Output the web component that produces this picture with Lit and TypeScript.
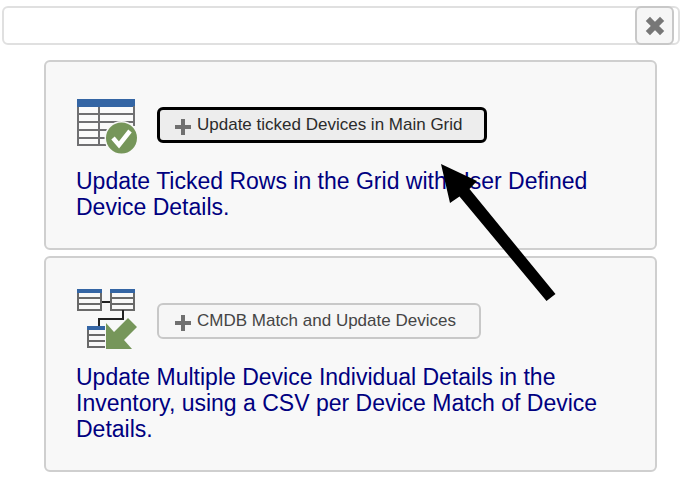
import { LitElement, html, css, svg } from "lit";
import { customElement } from "lit/decorators.js";

const plus = html`<svg class="plus" viewBox="0 -4 16 20" aria-hidden="true">
  <path d="M8 2V14M2 8H14" stroke="currentColor" stroke-width="4" stroke-linecap="square" />
</svg>`;

const miniTable = (x: number, y: number) => svg`
  <g transform="translate(${x} ${y})">
    <rect x="1" y="1" width="23" height="20" fill="#f8f8f8" stroke="#696969" stroke-width="2" />
    <path d="M1 9H25M1 15H25" stroke="#696969" stroke-width="2" />
    <rect width="25" height="4" fill="#3465a4" />
  </g>`;

const tableTickIcon = html`<svg class="icon" viewBox="0 1 62 62" aria-hidden="true">
  <rect x="2" y="8" width="56" height="45" fill="#fafafa" />
  <path d="M2 14V53H58V14M2 22H58M2 30H58M2 38H58M2 46H58M23 14V53"
    fill="none" stroke="#707072" stroke-width="2" />
  <rect x="1" y="7" width="58" height="8" fill="#3465a4" />
  <path d="M30 63V44Q32 35 44 31H62V63Z" fill="#f8f8f8" />
  <path d="M58 14V34" stroke="#707072" stroke-width="2" />
  <circle cx="45.500" cy="46" r="17" fill="#f8f8f8" />
  <circle cx="45.500" cy="46" r="15.500" fill="#76965a" />
  <path d="M37 46L43 53L54 39" fill="none" stroke="#fff" stroke-width="4.500" />
</svg>`;

const mappingIcon = html`<svg class="icon" viewBox="0 1 62 62" aria-hidden="true">
  <path d="M26 14H35" fill="none" stroke="#222" stroke-width="2" />
  ${miniTable(1, 1)}${miniTable(34, 1)}${miniTable(11, 38)}
  <path d="M29 33V62H62V30H50L41 38H30Z" fill="#f8f8f8" />
  <path d="M47 22V31H23V38" fill="none" stroke="#222" stroke-width="2" />
  <path d="M30 35L38 44L52 30L61 39L48 52L56 61H30Z" fill="#76965a" />
</svg>`;

@customElement("app-root")
export class AppRoot extends LitElement {
  static styles = css`
    :host {
      display: block;
      padding: 6px 1px 12px 2px;
      background: #fff;
      font-family: "Liberation Sans", Arial, sans-serif;
    }
    * {
      box-sizing: border-box;
    }
    .titlebar {
      display: flex;
      justify-content: flex-end;
      border: 2px solid #e0e0e0;
      border-radius: 6px;
      padding-right: 4px;
    }
    button {
      display: flex;
      align-items: center;
      justify-content: center;
      margin: 0;
      font: inherit;
      color: #454545;
      background: #f6f6f6;
      border: 2px solid #c8c8c8;
      border-radius: 6px;
    }
    .close {
      width: 39px;
      height: 39px;
      margin: -2px 0;
      padding: 0;
      color: #777;
    }
    .close svg {
      width: 20px;
      height: 20px;
    }
    main {
      display: flex;
      flex-direction: column;
      gap: 6px;
      padding: 15px 23px 0 42px;
    }
    .card {
      position: relative;
      padding: 31px 48px 28px 30px;
      background: #f8f8f8;
      border: 2px solid #cfcfcf;
      border-radius: 6px;
    }
    .row {
      display: flex;
      align-items: flex-start;
      gap: 19px;
    }
    .icon {
      flex: none;
      width: 62px;
      height: 62px;
    }
    .action {
      height: 36px;
      margin-top: 14px;
      padding: 0 23px 0 16px;
      gap: 6px;
      font-size: 17px;
      white-space: nowrap;
    }
    .action.focused {
      padding: 0 21px 0 15px;
      color: #2b2b2b;
      background: #ededed;
      border: 3px solid #000;
      outline: none;
    }
    .plus {
      width: 16px;
      height: 20px;
      color: #707070;
    }
    p {
      margin: 13px 0 0;
      font-size: 23px;
      line-height: 26px;
      color: #000080;
    }
    .pointer {
      position: absolute;
      left: 395px;
      top: 102px;
      width: 116px;
      height: 138px;
      z-index: 1;
      pointer-events: none;
    }
  `;

  render() {
    return html`
      <header class="titlebar">
        <button class="close" type="button" aria-label="Close">
          <svg viewBox="0 0 20 20" aria-hidden="true">
            <path d="M5 5L15 15M15 5L5 15" stroke="currentColor" stroke-width="6" stroke-linecap="square" stroke-linejoin="round" />
          </svg>
        </button>
      </header>
      <main>
        <section class="card">
          <div class="row">
            ${tableTickIcon}
            <button class="action focused" type="button">${plus}<span>Update ticked Devices in Main Grid</span></button>
          </div>
          <p>Update Ticked Rows in the Grid with User Defined Device Details.</p>
          <svg class="pointer" viewBox="0 0 116 138" aria-hidden="true">
            <path d="M0 0L36 17L28.500 25L114.500 130L105.500 137L18.500 32.500L9 39Z" fill="#000" />
          </svg>
        </section>
        <section class="card">
          <div class="row">
            ${mappingIcon}
            <button class="action" type="button">${plus}<span>CMDB Match and Update Devices</span></button>
          </div>
          <p>Update Multiple Device Individual Details in the Inventory, using a CSV per Device Match of Device Details.</p>
        </section>
      </main>
    `;
  }
}
